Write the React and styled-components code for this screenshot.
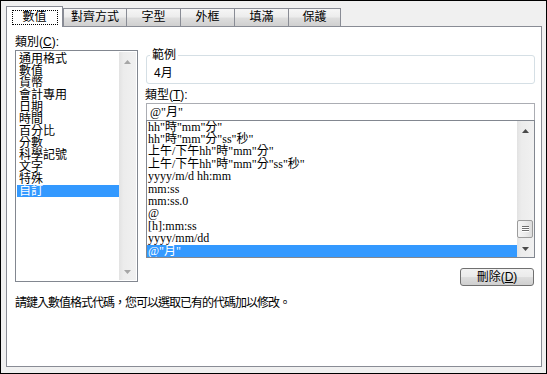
import styled, { createGlobalStyle } from 'styled-components';

const GlobalStyle = createGlobalStyle`
  html, body {
    margin: 0;
    padding: 0;
    background: #f0f0f0;
  }
  body {
    font-family: "Liberation Sans", "Noto Sans CJK TC", sans-serif;
    font-size: 12px;
    color: #000;
  }
`;

const listFont = `"Liberation Serif", "Noto Sans CJK TC", serif`;

const Dialog = styled.div`
    box-sizing: border-box;
    width: 547px;
    height: 374px;
    border: 1px solid #000;
    background: #f0f0f0;
    padding: 5px 4px 6px 5px;
    display: flex;
    flex-direction: column;
`

const TabStrip = styled.div`
    height: 20px;
    display: flex;
    align-items: flex-end;
`

const Tab = styled.div`
    box-sizing: border-box;
    width: ${p => p.$w}px;
    height: ${p => p.$active ? 21 : 18}px;
    margin-left: ${p => p.$overlap ? -1 : 0}px;
    margin-bottom: ${p => p.$active ? -1 : 0}px;
    border: 1px solid #898c95;
    border-bottom: none;
    background: ${p => p.$active
        ? '#fff'
        : 'linear-gradient(#f6f6f6 0%, #ececec 48%, #dedede 52%, #d0d0d0 100%)'};
    display: flex;
    justify-content: center;
    align-items: ${p => p.$active ? 'flex-start' : 'center'};
    padding-top: ${p => p.$active ? 3 : 0}px;
    line-height: 13px;
    position: relative;
    z-index: ${p => p.$active ? 2 : 1};
`

const Focus = styled.span`
    box-sizing: border-box;
    width: 46px;
    height: 15px;
    border: 1px dotted #000;
    display: flex;
    align-items: center;
    justify-content: center;
`

const Panel = styled.div`
    flex: 1;
    border: 1px solid #898c95;
    background: #fff;
    padding: 8px 6px 0 8px;
    display: flex;
    flex-direction: column;
`

const Columns = styled.div`
    display: grid;
    grid-template-columns: 123px 390px;
    column-gap: 7px;
    align-items: start;
`

const Column = styled.div`
    display: flex;
    flex-direction: column;
`

const Label = styled.div`
    line-height: 14px;
    margin: ${p => p.$top || 0}px 0 1px;
    u { text-decoration-thickness: 1px; text-underline-offset: 1px; }
`

const ListBox = styled.div`
    box-sizing: border-box;
    height: ${p => p.$h}px;
    margin: ${p => p.$mt || 0}px 0 0 ${p => p.$ml || 0}px;
    border: 1px solid #828790;
    padding: ${p => p.$pad}px;
    display: flex;
    background: #fff;
`

const Items = styled.div`
    flex: 1;
    min-width: 0;
    display: flex;
    flex-direction: column;
    justify-content: ${p => p.$bottom ? 'flex-end' : 'flex-start'};
    overflow: hidden;
    padding-top: ${p => p.$bottom ? 0 : 1}px;
    font-family: ${p => p.$serif ? listFont : 'inherit'};
`

const Option = styled.div`
    flex: none;
    height: ${p => p.$row}px;
    line-height: ${p => p.$row}px;
    padding-left: ${p => p.$indent}px;
    white-space: pre;
    background: ${p => p.$selected ? '#3399ff' : 'transparent'};
    color: ${p => p.$selected ? '#fff' : '#000'};
`

const ScrollBar = styled.div`
    width: 17px;
    flex: none;
    display: flex;
    flex-direction: column;
    background: linear-gradient(to right, #e2e2e2 0%, #ececec 25%, #f1f1f1 100%);
`

const ArrowBox = styled.div`
    height: 17px;
    flex: none;
    display: flex;
    justify-content: center;
    align-items: center;
    padding-top: ${p => p.$up ? 3 : 0}px;
    box-sizing: border-box;
`

const Track = styled.div`
    flex: 1;
    display: flex;
    flex-direction: column;
    justify-content: flex-end;
    align-items: center;
    padding-bottom: 2px;
`

const Thumb = styled.div`
    box-sizing: border-box;
    width: 16px;
    height: 18px;
    margin-right: 1px;
    border: 1px solid #9c9c9c;
    border-radius: 2px;
    background: linear-gradient(to right, #f5f5f5 0%, #ececec 50%, #dcdcdc 100%);
    display: flex;
    justify-content: center;
    align-items: center;
`

const Group = styled.fieldset`
    margin: 14px 0 0 1px;
    padding: 6px 7px 3px 7px;
    border: 1px solid #d5dfe5;
    border-radius: 3px;
    min-width: 0;
    line-height: 13px;
`

const Legend = styled.legend`
    padding: 0 2px;
    margin-left: -4px;
    line-height: 12px;
`

const TextBox = styled.div`
    box-sizing: border-box;
    height: 18px;
    margin-left: 1px;
    border: 1px solid #abadb3;
    padding-left: 3px;
    line-height: 16px;
    font-family: ${listFont};
    background: #fff;
`

const Button = styled.button`
    box-sizing: border-box;
    align-self: flex-end;
    width: 74px;
    height: 18px;
    margin: 10px 1px 0 0;
    padding: 0;
    border: 1px solid #707070;
    border-radius: 3px;
    background: linear-gradient(#f2f2f2 0%, #ebebeb 48%, #dddddd 52%, #cfcfcf 100%);
    font: inherit;
    line-height: 15px;
    color: #000;
    u { text-decoration-thickness: 1px; text-underline-offset: 1px; }
`

const Hint = styled.div`
    margin-top: 10px;
    line-height: 14px;
    letter-spacing: -1px;
`

const categories = ['通用格式', '數值', '貨幣', '會計專用', '日期', '時間', '百分比', '分數', '科學記號', '文字', '特殊', '自訂'];

const formats = [
    'hh"時"mm"分"',
    'hh"時"mm"分"ss"秒"',
    '上午/下午hh"時"mm"分"',
    '上午/下午hh"時"mm"分"ss"秒"',
    'yyyy/m/d hh:mm',
    'mm:ss',
    'mm:ss.0',
    '@',
    '[h]:mm:ss',
    'yyyy/mm/dd',
    '@"月"',
];

const tabs = [
    { name: '數值', w: 57 },
    { name: '對齊方式', w: 64 },
    { name: '字型', w: 55 },
    { name: '外框', w: 55 },
    { name: '填滿', w: 55 },
    { name: '保護', w: 53 },
];

function Arrow({ down, color }) {
    return (
        <svg width="7" height="4" viewBox="0 0 7 4">
            <polygon points={down ? '0,0 7,0 3.5,4' : '0,4 7,4 3.5,0'} fill={color} />
        </svg>
    )
}

function Scroll({ disabled, thumb }) {
    const c = disabled ? '#a6a6a6' : '#4a4a4a';
    return (
        <ScrollBar>
            <ArrowBox $up><Arrow color={c} /></ArrowBox>
            <Track>
                {thumb && (
                    <Thumb>
                        <svg width="7" height="6" viewBox="0 0 7 6">
                            <rect x="0" y="0" width="7" height="1" fill="#6e6e6e" />
                            <rect x="0" y="2" width="7" height="1" fill="#6e6e6e" />
                            <rect x="0" y="4" width="7" height="1" fill="#6e6e6e" />
                            <rect x="0" y="1" width="7" height="1" fill="#ffffff" />
                            <rect x="0" y="3" width="7" height="1" fill="#ffffff" />
                            <rect x="0" y="5" width="7" height="1" fill="#ffffff" />
                        </svg>
                    </Thumb>
                )}
            </Track>
            <ArrowBox><Arrow down color={c} /></ArrowBox>
        </ScrollBar>
    )
}

export default function App() {
    return (
        <>
            <GlobalStyle />
            <Dialog>
                <TabStrip>
                    {tabs.map((t, i) => (
                        <Tab key={t.name} $w={t.w} $active={i === 0} $overlap={i > 1}>
                            {i === 0 ? <Focus>{t.name}</Focus> : t.name}
                        </Tab>
                    ))}
                </TabStrip>
                <Panel>
                    <Columns>
                        <Column>
                            <Label>類別(<u>C</u>):</Label>
                            <ListBox $h={232} $pad={1}>
                                <Items>
                                    {categories.map((c, i) => (
                                        <Option key={c} $row={12} $indent={2} $selected={i === categories.length - 1}>{c}</Option>
                                    ))}
                                </Items>
                                <Scroll disabled />
                            </ListBox>
                        </Column>
                        <Column>
                            <Group>
                                <Legend>範例</Legend>
                                4月
                            </Group>
                            <Label $top={4}>類型(<u>T</u>):</Label>
                            <TextBox>@"月"</TextBox>
                            <ListBox $h={138} $pad={0} $mt={-1} $ml={1}>
                                <Items $bottom $serif>
                                    {formats.map((f, i) => (
                                        <Option key={f} $row={12.4} $indent={1} $selected={i === formats.length - 1}>{f}</Option>
                                    ))}
                                </Items>
                                <Scroll thumb />
                            </ListBox>
                            <Button>刪除(<u>D</u>)</Button>
                        </Column>
                    </Columns>
                    <Hint>請鍵入數值格式代碼，您可以選取已有的代碼加以修改。</Hint>
                </Panel>
            </Dialog>
        </>
    )
}
